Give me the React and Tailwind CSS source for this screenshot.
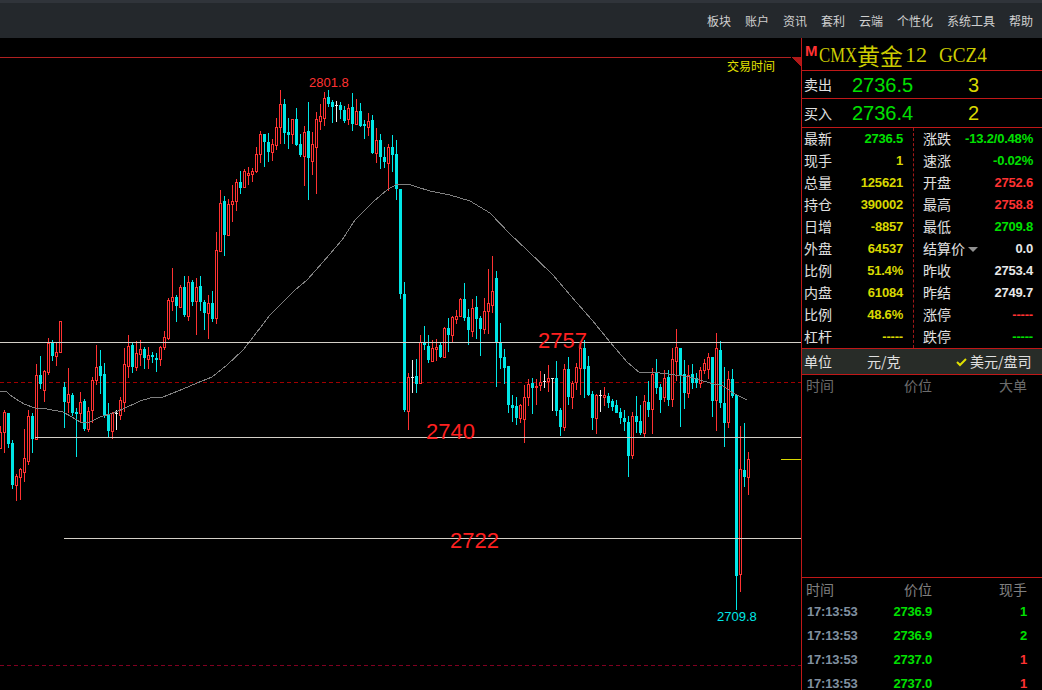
import React from 'react';

const CJK = "font-['Noto_Sans_CJK_SC','Liberation_Sans',sans-serif]";
const NUM = "font-['Liberation_Sans',sans-serif]";

const UP = '#ff3232';
const DOWN = '#00e6e6';

// type, high, body top, body bottom, low (pixel rows on the chart)
const CANDLES = [
  ['r', 426, 432, 448, 449], ['r', 410, 412, 432, 453], ['c', 413, 413, 444, 448], ['c', 440, 443, 485, 489],
  ['r', 474, 476, 485, 501], ['r', 468, 469, 477, 500], ['r', 429, 458, 472, 482], ['r', 410, 416, 461, 465],
  ['c', 413, 416, 439, 453], ['r', 364, 375, 439, 440], ['c', 356, 375, 384, 389], ['r', 370, 371, 390, 402],
  ['r', 338, 343, 372, 375], ['c', 340, 343, 356, 361], ['r', 342, 352, 356, 366], ['r', 321, 321, 352, 353],
  ['c', 382, 387, 402, 428], ['r', 368, 394, 402, 413], ['c', 393, 395, 413, 416], ['c', 408, 412, 414, 457],
  ['r', 392, 402, 413, 422], ['c', 399, 401, 429, 431], ['r', 407, 411, 429, 432], ['r', 377, 380, 410, 423],
  ['r', 345, 367, 380, 385], ['c', 350, 366, 376, 394], ['c', 363, 374, 416, 418], ['c', 403, 415, 431, 437],
  ['r', 412, 413, 431, 439], ['w', 410, 413, 414, 430], ['r', 397, 400, 415, 420], ['r', 348, 364, 402, 412],
  ['r', 335, 346, 366, 378], ['c', 342, 345, 367, 373], ['r', 341, 353, 367, 371], ['r', 340, 349, 354, 366],
  ['c', 347, 349, 358, 369], ['r', 347, 355, 359, 369], ['c', 352, 355, 357, 363], ['c', 353, 358, 360, 372],
  ['r', 346, 347, 359, 366], ['r', 331, 337, 347, 350], ['r', 298, 300, 338, 340], ['r', 268, 297, 301, 311],
  ['c', 295, 297, 306, 322], ['r', 285, 287, 307, 308], ['c', 276, 287, 315, 317], ['r', 276, 282, 316, 321],
  ['c', 280, 282, 302, 306], ['r', 278, 287, 301, 335], ['c', 276, 286, 302, 311], ['c', 300, 302, 313, 330],
  ['r', 295, 303, 313, 339], ['c', 291, 303, 319, 322], ['r', 232, 250, 318, 324], ['r', 190, 203, 251, 252],
  ['c', 196, 201, 235, 256], ['r', 199, 204, 235, 235], ['r', 185, 201, 204, 222], ['r', 179, 182, 201, 211],
  ['c', 171, 182, 188, 194], ['r', 169, 171, 187, 188], ['r', 167, 173, 175, 185], ['r', 168, 171, 174, 182],
  ['r', 147, 154, 171, 173], ['r', 131, 134, 154, 163], ['c', 134, 134, 142, 167], ['c', 133, 142, 152, 162],
  ['r', 139, 144, 152, 161], ['r', 118, 127, 145, 150], ['r', 90, 104, 127, 144], ['c', 99, 104, 133, 144],
  ['c', 118, 132, 135, 149], ['r', 119, 119, 134, 144], ['c', 108, 119, 145, 146], ['c', 134, 144, 155, 157],
  ['r', 126, 132, 156, 186], ['c', 102, 131, 158, 200], ['r', 132, 144, 161, 175], ['r', 112, 119, 147, 194],
  ['r', 104, 116, 121, 130], ['r', 92, 98, 118, 126], ['c', 90, 97, 104, 107], ['c', 100, 102, 107, 123],
  ['w', 101, 105, 106, 122], ['c', 102, 105, 110, 119], ['c', 106, 110, 121, 123], ['r', 104, 108, 119, 125],
  ['c', 93, 107, 124, 131], ['r', 99, 111, 124, 125], ['c', 103, 111, 126, 127], ['c', 120, 124, 126, 139],
  ['r', 113, 121, 127, 136], ['c', 115, 120, 153, 154], ['r', 128, 140, 153, 163], ['c', 134, 140, 157, 169],
  ['c', 147, 157, 162, 168], ['r', 144, 147, 163, 191], ['c', 135, 147, 155, 172], ['c', 140, 154, 189, 200],
  ['c', 189, 189, 294, 299], ['c', 282, 294, 410, 412], ['r', 373, 377, 411, 430], ['w', 360, 377, 378, 393],
  ['c', 359, 376, 384, 393], ['r', 335, 342, 383, 384], ['c', 326, 343, 345, 350], ['c', 335, 346, 360, 363],
  ['r', 340, 348, 361, 362], ['r', 339, 347, 349, 361], ['c', 342, 345, 357, 358], ['r', 327, 328, 357, 357],
  ['c', 318, 328, 335, 352], ['r', 316, 317, 335, 343], ['r', 310, 316, 319, 324], ['r', 298, 299, 316, 317],
  ['c', 283, 299, 318, 321], ['c', 309, 317, 330, 345], ['r', 299, 308, 331, 337], ['c', 296, 307, 319, 339],
  ['c', 316, 318, 329, 356], ['r', 298, 311, 329, 334], ['r', 269, 303, 311, 334], ['r', 256, 291, 305, 313],
  ['c', 271, 278, 343, 387], ['c', 323, 343, 358, 369], ['c', 349, 357, 368, 384], ['c', 366, 366, 405, 413],
  ['c', 395, 405, 408, 422], ['c', 397, 406, 418, 425], ['r', 404, 405, 418, 423], ['r', 385, 397, 419, 443],
  ['r', 379, 384, 397, 406], ['c', 378, 383, 388, 414], ['r', 379, 386, 387, 405], ['r', 371, 382, 385, 391],
  ['w', 374, 381, 382, 388], ['r', 365, 378, 381, 392], ['w', 378, 378, 379, 411], ['c', 361, 378, 411, 416],
  ['c', 408, 410, 427, 436], ['r', 364, 369, 427, 431], ['c', 357, 369, 397, 405], ['r', 381, 383, 397, 409],
  ['r', 363, 367, 382, 390], ['r', 347, 348, 368, 395], ['c', 340, 348, 369, 398], ['c', 356, 366, 395, 396],
  ['c', 391, 394, 418, 430], ['r', 394, 395, 418, 434], ['w', 390, 395, 396, 412], ['r', 387, 395, 397, 406],
  ['c', 393, 396, 403, 408], ['c', 399, 401, 407, 411], ['c', 400, 405, 413, 413], ['c', 408, 412, 418, 424],
  ['c', 410, 418, 422, 431], ['c', 416, 422, 456, 477], ['r', 412, 416, 455, 459], ['c', 396, 416, 422, 433],
  ['c', 405, 421, 433, 435], ['r', 395, 401, 433, 437], ['c', 381, 402, 410, 417], ['r', 368, 374, 409, 434],
  ['c', 359, 373, 388, 394], ['c', 384, 387, 400, 413], ['r', 370, 378, 397, 402], ['c', 370, 377, 400, 406],
  ['r', 348, 359, 399, 407], ['r', 329, 347, 361, 381], ['c', 348, 348, 375, 427], ['c', 360, 374, 393, 409],
  ['r', 365, 375, 393, 398], ['c', 364, 374, 383, 389], ['c', 373, 378, 383, 388], ['r', 367, 370, 383, 388],
  ['r', 359, 363, 370, 374], ['r', 353, 357, 369, 379], ['c', 357, 357, 401, 417], ['r', 333, 348, 400, 431],
  ['c', 341, 350, 403, 408], ['c', 367, 403, 423, 447], ['r', 371, 379, 422, 428], ['c', 369, 379, 396, 398],
  ['c', 395, 395, 576, 610], ['r', 426, 469, 574, 592], ['c', 423, 470, 477, 487], ['r', 452, 459, 477, 495],
];

const MA_LINE =
  '0,391 6,391 10,395 16,399 24,404 35,408 47,409 63,412 72,417 80,422 88,423 100,417 113,413 123,409 140,401 ' +
  '150,398 163,397 183,389 197,383 212,377 227,365 243,350 257,332 270,315 295,290 307,280 323,262 342,240 ' +
  '355,220 373,202 387,190 397,184 408,184 417,187 430,191 450,195 470,201 490,213 510,234 527,250 553,275 ' +
  '570,295 592,320 610,342 627,362 640,373 645,372 660,373 690,377 710,383 723,386 733,393 747,400';

function Candle({ data, index }) {
  const [type, high, top, bottom, low] = data;
  const x = index * 4;
  const mid = x + 0.5;

  if (type === 'w') {
    return (
      <g stroke='#f0f0f0'>
        <line x1={mid} x2={mid} y1={high} y2={low} />
        <line x1={x - 1} x2={x + 2} y1={top + 0.5} y2={top + 0.5} />
      </g>
    );
  }
  if (type === 'c') {
    return (
      <g>
        <line x1={mid} x2={mid} y1={high} y2={low} stroke={DOWN} />
        <rect x={x - 1} y={top} width={3} height={bottom - top} fill={DOWN} />
      </g>
    );
  }
  return (
    <g stroke={UP}>
      <line x1={mid} x2={mid} y1={high} y2={top} />
      <line x1={mid} x2={mid} y1={bottom} y2={low} />
      <rect x={x - 0.5} y={top + 0.5} width={2} height={bottom - top} fill='#000' />
    </g>
  );
}

function PriceChart() {
  return (
    <svg width='801' height='690' className='block' shapeRendering='crispEdges'>
      <line x1='0' x2='791' y1='57.5' y2='57.5' stroke='#b02020' />
      <polygon points='791,57 801,57 801,67' fill='#b01818' />
      <line x1='0' x2='801' y1='382.5' y2='382.5' stroke='#a00000' strokeDasharray='4 3' />
      <line x1='0' x2='801' y1='665.5' y2='665.5' stroke='#800020' strokeDasharray='4 3' />
      {CANDLES.map((c, i) => (
        <Candle key={i} data={c} index={i} />
      ))}
      <polyline points={MA_LINE} fill='none' stroke='#808080' />
      <line x1='0' x2='801' y1='342.5' y2='342.5' stroke='#d4d0c8' />
      <line x1='35' x2='801' y1='437.5' y2='437.5' stroke='#d4d0c8' />
      <line x1='64' x2='801' y1='538.5' y2='538.5' stroke='#d4d0c8' />
      <line x1='781' x2='801' y1='459.5' y2='459.5' stroke='#d8d800' />
    </svg>
  );
}

const LEFT_ROWS = [
  ['最新', '2736.5', 'text-[#00e000]'],
  ['现手', '1', 'text-[#d8d800]'],
  ['总量', '125621', 'text-[#d8d800]'],
  ['持仓', '390002', 'text-[#d8d800]'],
  ['日增', '-8857', 'text-[#d8d800]'],
  ['外盘', '64537', 'text-[#d8d800]'],
  ['比例', '51.4%', 'text-[#d8d800]'],
  ['内盘', '61084', 'text-[#d8d800]'],
  ['比例', '48.6%', 'text-[#d8d800]'],
  ['杠杆', '-----', 'text-[#d8d800]'],
];

const RIGHT_ROWS = [
  ['涨跌', '-13.2/0.48%', 'text-[#00e000]'],
  ['速涨', '-0.02%', 'text-[#00e000]'],
  ['开盘', '2752.6', 'text-[#ff3232]'],
  ['最高', '2758.8', 'text-[#ff3232]'],
  ['最低', '2709.8', 'text-[#00e000]'],
  ['结算价', '0.0', 'text-[#e8e8e8]'],
  ['昨收', '2753.4', 'text-[#e8e8e8]'],
  ['昨结', '2749.7', 'text-[#e8e8e8]'],
  ['涨停', '-----', 'text-[#ff3232]'],
  ['跌停', '-----', 'text-[#00e000]'],
];

const TRADES = [
  ['17:13:53', '2736.9', '1', 'text-[#00e000]'],
  ['17:13:53', '2736.9', '2', 'text-[#00e000]'],
  ['17:13:53', '2737.0', '1', 'text-[#ff3232]'],
  ['17:13:53', '2737.0', '1', 'text-[#ff3232]'],
];

function QuoteRow({ label, value, color }) {
  return (
    <div className='flex h-[22px] items-center justify-between'>
      <span className={`${CJK} mb-[2px] flex items-center text-[14px] text-[#e0e0e0]`}>
        {label}
        {label === '结算价' && (
          <span className='ml-[3px] mt-[2px] h-0 w-0 border-x-[5px] border-t-[5px] border-x-transparent border-t-[#909090]' />
        )}
      </span>
      <span className={`${NUM} mb-[1px] text-[13px] font-bold tracking-[-0.2px] ${color}`}>{value}</span>
    </div>
  );
}

function BidAskRow({ label, price, size, className }) {
  return (
    <div className={`flex items-center border-b border-[#c01818] ${className}`}>
      <span className={`${CJK} w-[50px] pl-[2px] text-[14px] text-[#e0e0e0]`}>{label}</span>
      <span className={`${NUM} w-[116px] text-[20px] text-[#00e000]`}>{price}</span>
      <span className={`${NUM} text-[20px] text-[#d8d800]`}>{size}</span>
    </div>
  );
}

function SidePanel() {
  return (
    <aside className='flex h-full w-[241px] shrink-0 flex-col overflow-hidden border-l border-[#c01818] pt-[2px]'>
      <div className='flex h-[31px] shrink-0 items-center border-b border-[#c01818] pl-[3px]'>
        <span className={`${NUM} mb-[9px] w-[14px] text-[15px] font-bold leading-none text-[#ff3232]`}>M</span>
        <span className="flex items-center font-['Liberation_Serif',serif] text-[22px] leading-none text-[#cccc00]">
          {/* the terminal's bitmap font is narrow, so latin runs are squeezed */}
          <span className='w-[38px]'>
            <span className='inline-block origin-left scale-x-[0.76]'>CMX</span>
          </span>
          <span className={`${CJK} w-[48px] text-[23px]`}>黄金</span>
          <span className='w-[34px]'>12</span>
          <span className='w-[48px]'>
            <span className='inline-block origin-left scale-x-[0.87]'>GCZ4</span>
          </span>
        </span>
      </div>
      <BidAskRow label='卖出' price='2736.5' size='3' className='h-[28px] shrink-0' />
      <BidAskRow label='买入' price='2736.4' size='2' className='h-[29px] shrink-0' />
      <div className='grid h-[221px] shrink-0 grid-cols-[112px_1fr] border-b border-[#c01818]'>
        <div className='border-r border-dashed border-[#a01818] pl-[2px] pr-[10px]'>
          {LEFT_ROWS.map(([label, value, color], i) => (
            <QuoteRow key={i} label={label} value={value} color={color} />
          ))}
        </div>
        <div className='pl-[9px] pr-[9px]'>
          {RIGHT_ROWS.map(([label, value, color], i) => (
            <QuoteRow key={i} label={label} value={value} color={color} />
          ))}
        </div>
      </div>
      <div className={`${CJK} flex h-[26px] shrink-0 items-center border-b border-[#c01818] bg-[#282c28] pl-[2px] text-[14px] text-[#e0e0e0]`}>
        <span className='w-[63px]'>单位</span>
        <span className='w-[89px]'>元/克</span>
        <svg width='12' height='10' viewBox='0 0 12 10' className='mr-[2px]'>
          <path d='M1 5 L4 8 L10 2' fill='none' stroke='#e0e000' strokeWidth='2' />
        </svg>
        <span>美元/盘司</span>
      </div>
      <div className={`${CJK} flex h-[203px] shrink-0 justify-between border-b border-[#c01818] pl-[4px] pr-[15px] text-[14px] text-[#6c6c6c]`}>
        <span>时间</span>
        <span className='ml-[3px]'>价位</span>
        <span>大单</span>
      </div>
      <div className={`${CJK} flex h-[22px] shrink-0 items-center justify-between pl-[4px] pr-[15px] text-[14px] text-[#808080]`}>
        <span>时间</span>
        <span className='ml-[3px]'>价位</span>
        <span>现手</span>
      </div>
      {TRADES.map(([time, price, size, color], i) => (
        <div key={i} className={`${NUM} flex h-[24px] shrink-0 items-center pl-[5px] pr-[15px] text-[13px] font-bold tracking-[-0.2px]`}>
          <span className='w-[56px] text-[#8090a0]'>{time}</span>
          <span className='w-[69px] text-right text-[#00e000]'>{price}</span>
          <span className={`flex-1 text-right ${color}`}>{size}</span>
        </div>
      ))}
    </aside>
  );
}

const MENU = ['板块', '账户', '资讯', '套利', '云端', '个性化', '系统工具', '帮助'];

export default function App() {
  return (
    <div className='flex h-[690px] w-[1042px] flex-col overflow-hidden bg-black'>
      <header className='flex h-[38px] shrink-0 items-center justify-end gap-[14px] border-t-[3px] border-[#30343a] bg-[#24282c] pr-[9px]'>
        {MENU.map((item) => (
          <span key={item} className={`${CJK} text-[12px] text-[#d0d0d0]`}>
            {item}
          </span>
        ))}
      </header>
      <main className='flex min-h-0 flex-1'>
        <section className='relative h-full w-[801px] shrink-0 overflow-hidden'>
          <div className='mt-[-38px]'>
            <PriceChart />
          </div>
          <span className={`${CJK} absolute left-[727px] top-[19px] text-[12px] leading-[18px] text-[#e0e000]`}>交易时间</span>
          <span className={`${NUM} absolute left-[309px] top-[37px] text-[13px] leading-[16px] text-[#ff3232]`}>2801.8</span>
          <span className={`${NUM} absolute left-[717px] top-[571px] text-[13px] leading-[16px] text-[#00e6e6]`}>2709.8</span>
          <span className={`${NUM} absolute left-[538px] top-[290px] text-[22px] leading-[26px] text-[#ff2020]`}>2757</span>
          <span className={`${NUM} absolute left-[426px] top-[381px] text-[22px] leading-[26px] text-[#ff2020]`}>2740</span>
          <span className={`${NUM} absolute left-[450px] top-[490px] text-[22px] leading-[26px] text-[#ff2020]`}>2722</span>
        </section>
        <SidePanel />
      </main>
    </div>
  );
}
